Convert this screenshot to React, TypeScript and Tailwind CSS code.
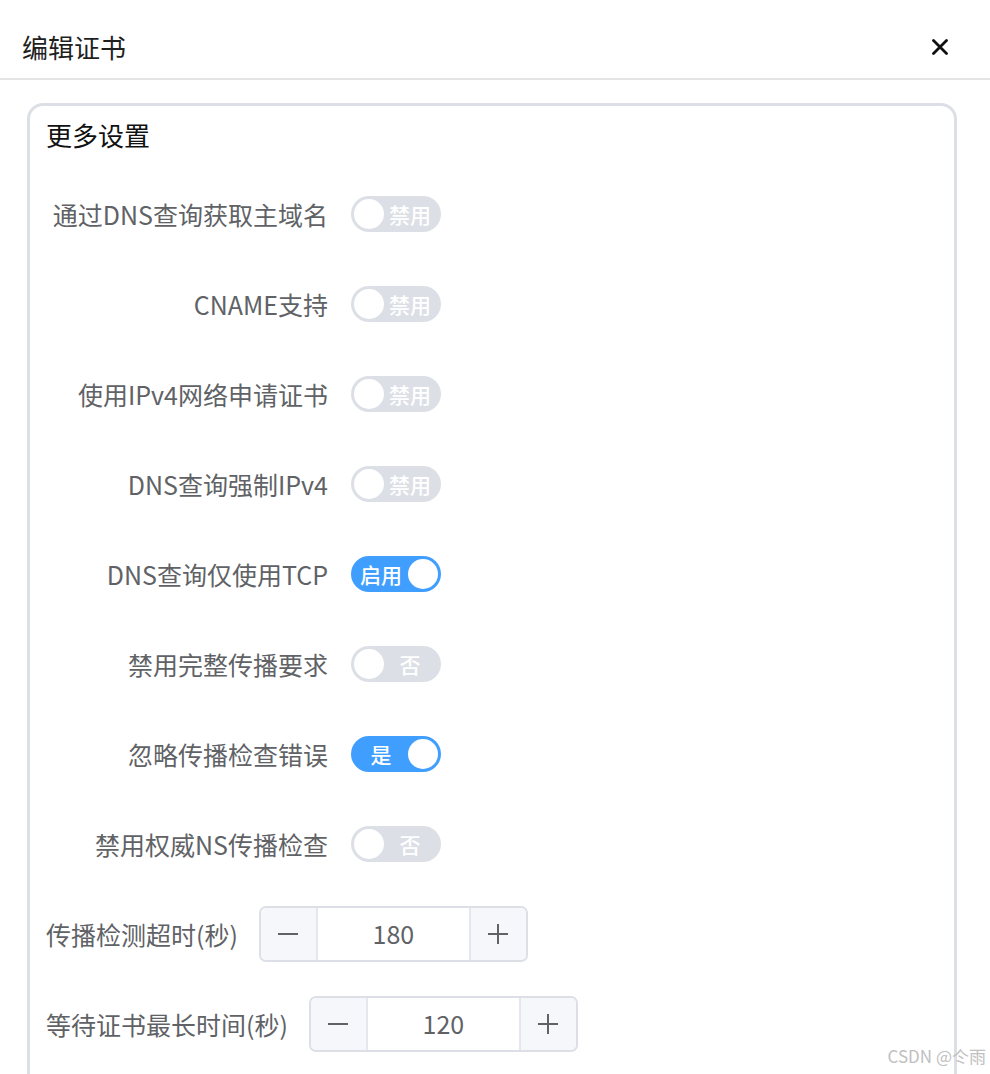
import { useState } from 'react'

type SwitchRow = {
  label: string
  on: boolean
  onText: string
  offText: string
}

const switchRows: SwitchRow[] = [
  { label: '通过DNS查询获取主域名', on: false, onText: '启用', offText: '禁用' },
  { label: 'CNAME支持', on: false, onText: '启用', offText: '禁用' },
  { label: '使用IPv4网络申请证书', on: false, onText: '启用', offText: '禁用' },
  { label: 'DNS查询强制IPv4', on: false, onText: '启用', offText: '禁用' },
  { label: 'DNS查询仅使用TCP', on: true, onText: '启用', offText: '禁用' },
  { label: '禁用完整传播要求', on: false, onText: '是', offText: '否' },
  { label: '忽略传播检查错误', on: true, onText: '是', offText: '否' },
  { label: '禁用权威NS传播检查', on: false, onText: '是', offText: '否' },
]

function Toggle({ on, onText, offText, onClick }: { on: boolean; onText: string; offText: string; onClick: () => void }) {
  return (
    <button
      type="button"
      onClick={onClick}
      className={
        'flex h-[36px] w-[90px] items-center rounded-full ' +
        (on ? 'bg-[#409eff] pr-[3px]' : 'bg-[#dcdfe6] pl-[3px]')
      }
    >
      {on ? (
        <>
          <span className="flex-1 pl-[3px] text-center text-[21px] font-medium leading-none text-white">{onText}</span>
          <span className="h-[30px] w-[30px] rounded-full bg-white" />
        </>
      ) : (
        <>
          <span className="h-[30px] w-[30px] rounded-full bg-white" />
          <span className="flex-1 pr-[5px] text-center text-[21px] font-medium leading-none text-white">{offText}</span>
        </>
      )}
    </button>
  )
}

function NumberBox({ value }: { value: number }) {
  return (
    <div className="flex h-[56px] w-[269px] overflow-hidden rounded-[7px] border-2 border-[#dcdfe6] bg-white">
      <div className="grid w-[57px] place-items-center border-r-2 border-[#e4e7ed] bg-[#f5f7fa]">
        <svg width="22" height="22" viewBox="0 0 22 22">
          <line x1="1" y1="11" x2="21" y2="11" stroke="#606266" strokeWidth="2" />
        </svg>
      </div>
      <div className="flex flex-1 items-center justify-center text-[25px] text-[#606266]">{value}</div>
      <div className="grid w-[57px] place-items-center border-l-2 border-[#e4e7ed] bg-[#f5f7fa]">
        <svg width="22" height="22" viewBox="0 0 22 22">
          <line x1="1" y1="11" x2="21" y2="11" stroke="#606266" strokeWidth="2" />
          <line x1="11" y1="1" x2="11" y2="21" stroke="#606266" strokeWidth="2" />
        </svg>
      </div>
    </div>
  )
}

export default function App() {
  const [states, setStates] = useState(switchRows.map((r) => r.on))

  return (
    <div className="relative h-[1074px] overflow-hidden bg-white font-['Noto_Sans_CJK_SC','Noto_Sans',sans-serif]">
      {/* Dialog header */}
      <header className="flex h-[80px] items-center justify-between border-b-2 border-[#e4e4e4] pl-[22px] pr-[42px] pt-[16px]">
        <h1 className="text-[26px] leading-none text-[#1f1f1f]">编辑证书</h1>
        <svg width="16" height="16" viewBox="0 0 16 16">
          <path d="M1.5 1.5 L14.5 14.5 M14.5 1.5 L1.5 14.5" stroke="#111" strokeWidth="2.8" strokeLinecap="round" />
        </svg>
      </header>

      {/* Settings card */}
      <section className="ml-[27px] mt-[23px] h-[1100px] w-[930px] rounded-[16px] border-[3px] border-[#dcdfe6] px-[16px] pt-[11px]">
        <h2 className="text-[26px] leading-[36px] text-[#111]">更多设置</h2>

        <div className="mt-[16px]">
          {switchRows.map((row, i) => (
            <div key={row.label} className="flex h-[90px] items-center">
              <label className="w-[305px] pr-[23px] text-right text-[25px] leading-none text-[#606266]">
                {row.label}
              </label>
              <Toggle
                on={states[i]}
                onText={row.onText}
                offText={row.offText}
                onClick={() => setStates((s) => s.map((v, j) => (j === i ? !v : v)))}
              />
            </div>
          ))}

          <div className="flex h-[90px] items-center gap-[21px]">
            <label className="text-[25px] leading-none text-[#606266]">传播检测超时(秒)</label>
            <NumberBox value={180} />
          </div>
          <div className="flex h-[90px] items-center gap-[21px]">
            <label className="text-[25px] leading-none text-[#606266]">等待证书最长时间(秒)</label>
            <NumberBox value={120} />
          </div>
        </div>
      </section>

      <div className="absolute bottom-[6px] right-[4px] text-[17px] text-[#c0c0c0]">CSDN @仒雨</div>
    </div>
  )
}
